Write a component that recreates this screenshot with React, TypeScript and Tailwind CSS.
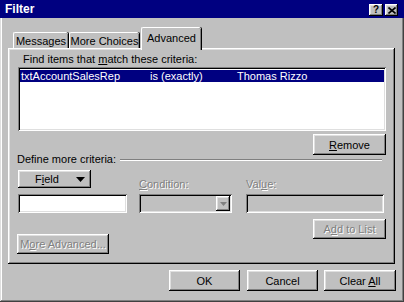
const raised =
  "bg-[#c0c0c0] shadow-[inset_-1px_-1px_0_#000,inset_1px_1px_0_#fff,inset_-2px_-2px_0_#808080,inset_2px_2px_0_#dfdfdf]";
const sunken =
  "shadow-[inset_1px_1px_0_#808080,inset_-1px_-1px_0_#fff,inset_2px_2px_0_#000,inset_-2px_-2px_0_#dfdfdf]";
const disabled = "text-[#808080] [text-shadow:1px_1px_0_#fff]";

function Btn({ w, children, off }: { w: string; children: React.ReactNode; off?: boolean }) {
  return (
    <div className={`${w} h-full flex items-center justify-center whitespace-nowrap ${raised} ${off ? disabled : ""}`}>
      <span>{children}</span>
    </div>
  );
}

function Tab({ label, w, active }: { label: string; w: string; active?: boolean }) {
  if (active) {
    return (
      <div className={`relative h-[23px] ${w} ml-[2px] bg-[#c0c0c0] border-t border-l border-white rounded-t-[2px] shadow-[inset_-1px_0_0_#808080,1px_0_0_#000] flex items-start justify-center pt-[3px] whitespace-nowrap`}>
        {label}
      </div>
    );
  }
  return (
    <div className={`h-[16px] ${w} mb-[2px] bg-[#c0c0c0] border-t border-l border-white rounded-t-[2px] shadow-[inset_-1px_0_0_#808080,1px_0_0_#000] flex items-center justify-center whitespace-nowrap`}>
      {label}
    </div>
  );
}

export default function App() {
  return (
    <div className="w-[404px] h-[302px] bg-[#c0c0c0] font-['Liberation_Sans',Arial,sans-serif] text-[11px] leading-[14px] text-black flex flex-col px-[2px] pb-[2px] shadow-[inset_-1px_-1px_0_#404040,inset_1px_0_0_#dfdfdf,inset_-2px_-2px_0_#808080,inset_2px_0_0_#fff] overflow-hidden">
      {/* title bar */}
      <div className="h-[18px] -mx-[2px] bg-[#000080] flex items-center justify-between pl-[5px] pr-[6px]">
        <span className="font-bold text-white text-[12px]">Filter</span>
        <div className="flex gap-[2px] mt-[2px]">
          <div className={`w-[14px] h-[12px] ${raised} flex items-center justify-center font-bold text-[10px] leading-none`}>?</div>
          <div className={`w-[13px] h-[12px] ${raised} flex items-center justify-center`}>
            <svg width="8" height="7" viewBox="0 0 8 7">
              <path d="M0.5 0.5 L7.5 6.5 M7.5 0.5 L0.5 6.5" stroke="#000" strokeWidth="1.6" />
            </svg>
          </div>
        </div>
      </div>

      {/* tabs */}
      <div className="mt-[9px] -mb-[2px] relative z-10 flex items-end pl-[11px] h-[23px]">
        <Tab label="Messages" w="w-[55px]" />
        <div className="ml-[1px]" />
        <Tab label="More Choices" w="w-[70px]" />
        <Tab label="Advanced" w="w-[60px]" active />
      </div>

      {/* panel */}
      <div className={`ml-[6px] w-[387px] h-[216px] ${raised} flex flex-col pl-[10px] pr-[9px] pt-[4px]`}>
        <div className="ml-[5px] h-[14px]">
          Find items that <u>m</u>atch these criteria:
        </div>
        <div className={`mt-[1px] h-[64px] bg-white ${sunken} p-[2px] pt-[3px]`}>
          <div className="h-[12px] bg-[#000080] text-white flex items-center leading-[12px]">
            <span className="w-[130px] pl-[1px]">txtAccountSalesRep</span>
            <span className="w-[87px]">is (exactly)</span>
            <span>Thomas Rizzo</span>
          </div>
        </div>
        <div className="mt-[3px] h-[21px] flex justify-end">
          <Btn w="w-[73px]"><u>R</u>emove</Btn>
        </div>
        <div className="-mt-[3px] h-[14px] flex items-center -ml-[1px]">
          <span>Define more criteria:</span>
          <div className="flex-1 ml-[4px] mr-[4px] border-t border-[#808080] border-b border-b-white mt-[1px]" />
        </div>

        <div className="mt-[4px] grid grid-cols-[109px_93px_140px] gap-x-[12px] gap-y-[6px]">
          <div className="h-[18px] flex">
            <div className={`w-[73px] h-full ${raised} flex items-center pl-[17px]`}>
              <span>F<u>i</u>eld</span>
              <svg className="ml-[17px]" width="9" height="5" viewBox="0 0 9 5">
                <path d="M0 0 H9 L4.5 5 Z" fill="#000" />
              </svg>
            </div>
          </div>
          <div className={`h-[18px] pt-[7px] ${disabled}`}><u>C</u>ondition:</div>
          <div className={`h-[18px] pt-[7px] ml-[2px] ${disabled}`}>Val<u>u</u>e:</div>

          <div className={`h-[19px] bg-white ${sunken}`} />
          <div className={`h-[19px] ${sunken} flex justify-end p-[2px]`}>
            <div className={`w-[14px] h-full ${raised} flex items-center justify-center`}>
              <svg width="7" height="4" viewBox="0 0 7 4">
                <path d="M0 0 H7 L3.5 4 Z" fill="#808080" />
              </svg>
            </div>
          </div>
          <div className={`h-[19px] ml-[2px] ${sunken}`} />
        </div>

        <div className="mt-[6px] flex justify-between items-start">
          <div className="mt-[15px] h-[20px] -ml-[1px]">
            <Btn w="w-[92px]" off>M<u>o</u>re Advanced...</Btn>
          </div>
          <div className="h-[20px]">
            <Btn w="w-[73px]" off>A<u>d</u>d to List</Btn>
          </div>
        </div>
      </div>

      {/* bottom buttons */}
      <div className="mt-[6px] h-[21px] flex justify-end pr-[6px]">
        <Btn w="w-[71px]">OK</Btn>
        <div className="ml-[7px] h-full"><Btn w="w-[71px]">Cancel</Btn></div>
        <div className="ml-[6px] h-full"><Btn w="w-[72px]">Clear <u>A</u>ll</Btn></div>
      </div>
    </div>
  );
}
